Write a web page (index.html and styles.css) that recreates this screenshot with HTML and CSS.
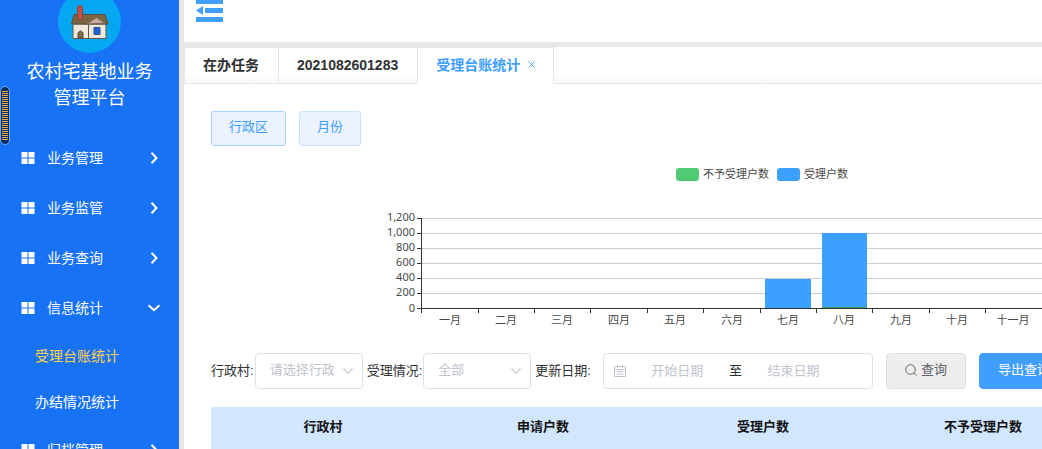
FILE: index.html
```html
<!DOCTYPE html>
<html lang="zh-CN">
<head>
<meta charset="utf-8">
<title>农村宅基地业务管理平台</title>
<link rel="stylesheet" href="styles.css">
</head>
<body>
<svg class="defs" aria-hidden="true">
  <symbol id="grid" viewBox="0 0 14 14"><path d="M.5 1h6v5.500h-6zM7.500 1h6v5.500h-6zM.5 7.500h6v5.500h-6zM7.500 7.500h6v5.500h-6z" fill="#fff"/></symbol>
  <symbol id="right" viewBox="0 0 14 14"><path d="M4.500 1.800l5 5.200-5 5.200" fill="none" stroke="#fff" stroke-width="2"/></symbol>
  <symbol id="down" viewBox="0 0 14 14"><path d="M1.500 4.200L7 9.200l5.500-5" fill="none" stroke="#fff" stroke-width="2"/></symbol>
  <symbol id="thin-down" viewBox="0 0 12 12"><path d="M1.500 3.500L6 8.300l4.500-4.800" fill="none" stroke="#c0c4cc" stroke-width="1.100"/></symbol>
</svg>
<div class="app">
  <aside class="sidebar">
    <svg class="logo" width="63" height="53" viewBox="0 0 63 53" aria-hidden="true">
      <circle cx="31.500" cy="21.500" r="31.500" fill="#05a7f1"/>
      <path d="M15 24h33v14.500H15z" fill="#efe9dc" stroke="#62574a"/>
      <path d="M16 14.500h31l3 9.500H13.500z" fill="#7b6640" stroke="#574c3c"/>
      <path d="M30.500 24v14.500" stroke="#62574a"/>
      <path d="M29 24l9.500-6.500L47 23z" fill="#c9aea0" stroke="#7c6658"/>
      <path d="M19.500 20V8l1-2.500h3L24.500 8v12z" fill="#c64f43" stroke="#7c4a45"/>
      <path d="M20 38v-5q2.500-4 5 0v5z" fill="#826b47" stroke="#554838"/>
      <path d="M36 27.500h6v7h-6z" fill="#1a60d8" stroke="#34508c"/>
    </svg>
    <h1 class="brand">农村宅基地业务<br>管理平台</h1>
    <nav class="menu">
      <button class="item"><svg><use href="#grid"/></svg><span>业务管理</span><svg><use href="#right"/></svg></button>
      <button class="item"><svg><use href="#grid"/></svg><span>业务监管</span><svg><use href="#right"/></svg></button>
      <button class="item"><svg><use href="#grid"/></svg><span>业务查询</span><svg><use href="#right"/></svg></button>
      <button class="item" aria-expanded="true"><svg><use href="#grid"/></svg><span>信息统计</span><svg><use href="#down"/></svg></button>
      <a class="sub current" href="#ledger">受理台账统计</a>
      <a class="sub" href="#progress">办结情况统计</a>
      <button class="item"><svg><use href="#grid"/></svg><span>归档管理</span><svg><use href="#right"/></svg></button>
    </nav>
    <div class="handle"></div>
  </aside>
  <main class="main">
    <header class="topbar">
      <button class="collapse" aria-label="收起菜单">
        <svg width="28" height="22" viewBox="0 0 28 22"><path d="M0 0h27v4H0zM9 8h18v5H9zM0 17h27v5H0zM0 10.500L7 6v9z" fill="#409eff"/></svg>
      </button>
    </header>
    <div class="tabs" role="tablist">
      <button class="tab" role="tab">在办任务</button>
      <button class="tab" role="tab">2021082601283</button>
      <button class="tab active" role="tab" aria-selected="true">受理台账统计<svg width="7" height="7" viewBox="0 0 7 7"><path d="M.5.5l6 6M6.500.5l-6 6" stroke="#409eff" stroke-width=".9"/></svg></button>
    </div>
    <section class="pane">
      <div class="switch">
        <button class="plain chosen">行政区</button>
        <button class="plain">月份</button>
      </div>
      <svg class="chart" width="1100" height="175" viewBox="0 0 1100 175" role="img" aria-label="每月受理户数">
        <rect x="465" y="8" width="23" height="13" rx="3" fill="#4fcb74"/>
        <text x="492" y="18">不予受理户数</text>
        <rect x="566" y="8" width="23" height="13" rx="3" fill="#3ba0ff"/>
        <text x="593" y="18">受理户数</text>
        <path class="rule" d="M211 58.500h676M211 73.500h676M211 88.500h676M211 103.500h676M211 118.500h676M211 133.500h676"/>
        <rect x="554" y="119" width="46" height="29" fill="#3ba0ff"/>
        <rect x="611" y="73" width="45" height="75" fill="#3ba0ff"/>
        <path class="axis" d="M210.500 58v90M206 148.500h681M206 58.500h4M206 73.500h4M206 88.500h4M206 103.500h4M206 118.500h4M206 133.500h4M210.500 148v5M267.500 148v5M323.500 148v5M379.500 148v5M436.500 148v5M492.500 148v5M549.500 148v5M605.500 148v5M661.500 148v5M718.500 148v5M774.500 148v5M831.500 148v5M887.500 148v5"/>
        <path d="M611 147.500h45" stroke="#3f9e68"/>
        <g text-anchor="end">
          <text x="204" y="61">1,200</text><text x="204" y="76">1,000</text><text x="204" y="91">800</text><text x="204" y="106">600</text><text x="204" y="121">400</text><text x="204" y="136">200</text><text x="204" y="152">0</text>
        </g>
        <g text-anchor="middle">
          <text x="239" y="164">一月</text><text x="295" y="164">二月</text><text x="351" y="164">三月</text><text x="408" y="164">四月</text><text x="464" y="164">五月</text><text x="521" y="164">六月</text><text x="577" y="164">七月</text><text x="633" y="164">八月</text><text x="690" y="164">九月</text><text x="746" y="164">十月</text><text x="802" y="164">十一月</text><text x="859" y="164">十二月</text>
        </g>
      </svg>
      <form class="filters">
        <label for="village">行政村:</label>
        <div class="select"><select id="village"><option>请选择行政区</option></select><svg><use href="#thin-down"/></svg></div>
        <label for="state">受理情况:</label>
        <div class="select"><select id="state"><option>全部</option></select><svg><use href="#thin-down"/></svg></div>
        <label for="from">更新日期:</label>
        <div class="range">
          <svg width="12" height="12" viewBox="0 0 12 12"><path d="M.5 1.500h11v10H.5zM.5 4.500h11M3.500 0v3M8.500 0v3M2.500 6.500h7M2.500 9h7" fill="none" stroke="#c0c4cc"/></svg>
          <input id="from" type="text" placeholder="开始日期">
          <span>至</span>
          <input type="text" placeholder="结束日期" aria-label="结束日期">
        </div>
        <button type="button" class="action search"><svg width="12" height="12" viewBox="0 0 12 12"><circle cx="5.500" cy="5.500" r="4.800" fill="none" stroke="#606266"/><path d="M9 9l2.500 2.500" stroke="#606266"/></svg>查询</button>
        <button type="button" class="action export">导出查询结果</button>
      </form>
      <table class="data">
        <thead><tr><th>行政村</th><th>申请户数</th><th>受理户数</th><th>不予受理户数</th><th>办结户数</th></tr></thead>
      </table>
    </section>
  </main>
</div>
</body>
</html>
```
FILE: styles.css
```css
* { box-sizing: border-box; }
body {
  margin: 0;
  overflow: hidden;
  font: 13px/20px "Liberation Sans", "Noto Sans CJK SC", sans-serif;
  color: #303133;
}
button, input, select { font: inherit; color: inherit; margin: 0; }
button { cursor: pointer; }
.defs { position: absolute; width: 0; height: 0; }
.app { display: flex; height: 100vh; background: #e8e8e8; }

.sidebar {
  flex: none;
  width: 179px;
  margin-right: 5px;
  overflow: hidden;
  background: #1772f6;
  color: #fff;
}
.logo { display: block; margin: 0 auto; }
.brand {
  margin: 6px 0 22px;
  font-size: 18px;
  line-height: 26px;
  font-weight: 400;
  text-align: center;
}
.menu { display: flex; flex-direction: column; font-size: 14px; }
.item {
  display: flex;
  align-items: center;
  gap: 12px;
  height: 50px;
  padding: 0 18px 0 21px;
  border: 0;
  background: none;
  text-align: left;
}
.item svg { flex: none; width: 14px; height: 14px; }
.item span { flex: 1; }
.sub {
  height: 46px;
  padding-left: 35px;
  line-height: 46px;
  color: #fff;
  text-decoration: none;
}
.sub.current { color: #ffd04b; }
.handle {
  position: absolute;
  left: 0;
  top: 86px;
  width: 10px;
  height: 59px;
  border: 1px solid #75aaf8;
  border-radius: 5px;
  background: repeating-linear-gradient(#f0ae45 0 1px, #0c2d63 1px 2px) center / 6px 49px no-repeat #0c2d63;
}

.main { flex: 1; min-width: 0; display: flex; flex-direction: column; overflow: hidden; }
.topbar { flex: none; height: 42px; margin-bottom: 5px; padding-left: 12px; background: #fff; }
.collapse { display: block; padding: 0; border: 0; background: none; }
.collapse svg { display: block; }
.tabs {
  flex: none;
  display: flex;
  height: 37px;
  border-bottom: 1px solid #e4e7ed;
  border-left: 1px solid #e4e7ed;
  background: linear-gradient(#fff 28px, #f8f8f8);
}
.tab {
  height: 37px;
  padding: 0 19px 2px 18px;
  border: solid #e4e7ed;
  border-width: 1px 1px 1px 0;
  background: none;
  font-size: 14px;
  font-weight: 700;
}
.tab.active {
  display: flex;
  align-items: center;
  gap: 8px;
  padding-right: 18px;
  border-bottom-color: #fff;
  background: #fff;
  color: #409eff;
}

.pane { flex: 1; padding: 27px; background: #fff; }
.switch { display: flex; gap: 13px; margin-bottom: 14px; }
.plain {
  height: 35px;
  padding: 0 17px 3px;
  border: 1px solid #c6e2ff;
  border-radius: 3px;
  background: #ecf3ff;
  color: #409eff;
}
.chosen { border-color: #a8d1ff; }
.chart { display: block; margin-bottom: 18px; font-size: 11px; font-family: "Noto Sans", "Noto Sans CJK SC", sans-serif; }
.chart text { fill: #4a4a4a; }
.rule { stroke: #ccc; fill: none; }
.axis { stroke: #333; fill: none; }

.filters { display: flex; align-items: center; gap: 1px; width: max-content; margin-bottom: 18px; }
.select { position: relative; width: 108px; height: 36px; margin-right: 3px; }
.select select {
  width: 100%;
  height: 100%;
  padding: 0 28px 2px 14px;
  border: 1px solid #dcdfe6;
  border-radius: 4px;
  background: #fff;
  color: #c0c4cc;
  appearance: none;
}
.select svg { position: absolute; right: 9px; top: 12px; width: 12px; height: 12px; pointer-events: none; }
.range {
  display: flex;
  align-items: center;
  width: 270px;
  height: 36px;
  margin: 0 12px 0 11px;
  padding: 0 10px;
  border: 1px solid #dcdfe6;
  border-radius: 4px;
}
.range svg { flex: none; }
.range input { width: 103px; padding: 0; border: 0; background: none; text-align: center; }
.range input::placeholder { color: #c0c4cc; opacity: 1; }
.action { height: 36px; border: 1px solid #dcdfe6; border-radius: 4px; padding: 0 18px 2px; }
.search { display: flex; align-items: center; gap: 4px; margin-right: 12px; background: #eee; color: #606266; }
.export { border-color: #409eff; background: #409eff; color: #fff; }

.data { width: 1100px; table-layout: fixed; border-collapse: collapse; }
.data th { height: 42px; padding: 0 0 2px 4px; background: #d1e6ff; color: #111; font-weight: 700; }
```
